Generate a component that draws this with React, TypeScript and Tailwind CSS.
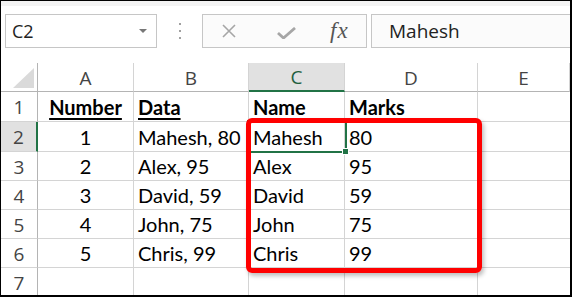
import React from 'react';

type Row = { n: string; a: string; b: string; c: string; d: string; head?: boolean };

const rows: Row[] = [
  { n: '1', a: 'Number', b: 'Data', c: 'Name', d: 'Marks', head: true },
  { n: '2', a: '1', b: 'Mahesh, 80', c: 'Mahesh', d: '80' },
  { n: '3', a: '2', b: 'Alex, 95', c: 'Alex', d: '95' },
  { n: '4', a: '3', b: 'David, 59', c: 'David', d: '59' },
  { n: '5', a: '4', b: 'John, 75', c: 'John', d: '75' },
  { n: '6', a: '5', b: 'Chris, 99', c: 'Chris', d: '99' },
  { n: '7', a: '', b: '', c: '', d: '' },
];

const letters = ['A', 'B', 'C', 'D', 'E'];

const uiFont = "font-['Open_Sans','Noto_Sans',sans-serif]";
const cellFont = "font-['Lato','Open_Sans',sans-serif]";

export default function App() {
  return (
    <div className="relative w-[572px] h-[297px] overflow-hidden bg-white border-l border-t border-r-2 border-b-2 border-black flex flex-col">
      {/* ribbon strip */}
      <div className="h-[5px] bg-[#f3f3f3] shrink-0" />

      {/* formula bar */}
      <div className="flex items-stretch h-[34px] mt-[8px] shrink-0">
        <div className={`ml-[4px] w-[152px] border border-[#c6c6c6] bg-white flex items-center justify-between pl-[6px] pr-[9px] ${uiFont}`}>
          <span className="text-[18px] text-[#222]">C2</span>
          <span className="w-0 h-0 border-l-[4px] border-r-[4px] border-t-[4px] border-l-transparent border-r-transparent border-t-[#777]" />
        </div>
        <div className="w-[45px] flex flex-col items-center justify-center gap-[5px]">
          <span className="w-[2px] h-[2px] bg-[#a0a0a0]" />
          <span className="w-[2px] h-[2px] bg-[#a0a0a0]" />
          <span className="w-[2px] h-[2px] bg-[#a0a0a0]" />
        </div>
        <div className="w-[165px] border border-[#c6c6c6] bg-[#fbfbfb] flex items-center">
          <svg className="ml-[18px]" width="16" height="16" viewBox="0 0 16 16">
            <path d="M2 2 L14 14 M14 2 L2 14" stroke="#a6a6a6" strokeWidth="1.6" fill="none" />
          </svg>
          <svg className="ml-[40px] mt-[4px]" width="19" height="12" viewBox="0 0 19 12">
            <path d="M1 6 L6.5 11 L18 1" stroke="#a6a6a6" strokeWidth="2.8" fill="none" />
          </svg>
          <span className="ml-[34px] font-['Liberation_Serif',serif] italic text-[23px] tracking-[1px] text-[#555] leading-none pb-[2px]">
            fx
          </span>
        </div>
        <div className={`ml-[4px] flex-1 border border-r-0 border-[#c6c6c6] bg-[#fbfbfb] flex items-center pl-[17px] ${uiFont}`}>
          <span className="text-[19px] text-[#222]">Mahesh</span>
        </div>
      </div>

      {/* sheet grid */}
      <div className="mt-[15px] grid grid-cols-[37px_96px_115px_96px_133px_92px] grid-rows-[29px_30px_30px_29px_29px_29px_29px_29px]">
        {/* corner */}
        <div className="border-r border-b border-[#b4b4b4] flex items-end justify-end pr-[3px] pb-[3px]">
          <div className="w-[21px] h-[20px] bg-[#dadada] [clip-path:polygon(100%_0,100%_100%,0_100%)]" />
        </div>
        {letters.map((l) => (
          <div
            key={l}
            className={`flex items-center justify-center pt-[2px] ${uiFont} text-[19px] ${
              l === 'C'
                ? 'bg-[#e1e1e1] border-b-2 border-b-[#217346] border-r border-r-[#d4d4d4] text-[#1f5f3e]'
                : 'border-r border-r-[#d4d4d4] border-b border-b-[#b4b4b4] text-[#444]'
            }`}
          >
            {l}
          </div>
        ))}

        {rows.map((r) => (
          <React.Fragment key={r.n}>
            <div
              className={`flex items-center justify-center pt-[2px] ${uiFont} text-[19px] text-[#444] border-b border-b-[#d4d4d4] ${
                r.n === '2'
                  ? 'bg-[#e1e1e1] border-r-2 border-r-[#217346]'
                  : 'border-r border-r-[#b4b4b4]'
              }`}
            >
              {r.n}
            </div>
            <div className={`border-r border-b border-[#d4d4d4] flex items-end justify-center pb-[2px] ${cellFont} text-[20px] leading-[24px] text-black`}>
              <span className={r.head ? 'font-bold underline underline-offset-[3px] decoration-[1.5px]' : ''}>{r.a}</span>
            </div>
            {[r.b, r.c, r.d].map((v, i) => (
              <div
                key={i}
                className={`border-r border-b border-[#d4d4d4] flex items-end pl-[4px] pb-[2px] whitespace-nowrap ${cellFont} text-[20px] leading-[24px] text-black`}
              >
                <span className={r.head ? 'font-bold underline underline-offset-[3px] decoration-[1.5px]' : ''}>{v}</span>
              </div>
            ))}
            <div className="border-b border-[#d4d4d4]" />
          </React.Fragment>
        ))}
      </div>

      {/* active cell outline */}
      <div className="absolute left-[246px] top-[119px] w-[100px] h-[33px] border-2 border-[#217346]" />
      <div className="absolute left-[341px] top-[147px] w-[7px] h-[7px] bg-[#217346] border border-white" />

      {/* red highlight box */}
      <div className="absolute left-[245px] top-[117px] w-[236px] h-[155px] border-[5px] border-[#ff0000] rounded-[6px] shadow-[2px_3px_4px_rgba(0,0,0,0.25)]" />
    </div>
  );
}
